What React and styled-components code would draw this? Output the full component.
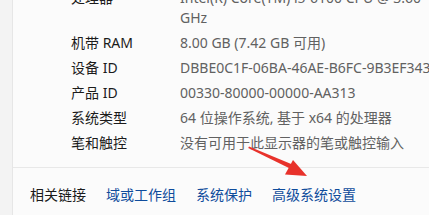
import React from "react";
import styled, { createGlobalStyle } from "styled-components";

const Global = createGlobalStyle`
  html, body { margin: 0; padding: 0; background: #f3f3f3; overflow: hidden; }
  body { font-family: "Segoe UI", "Noto Sans", "Noto Sans CJK SC", sans-serif; }
`;

const Page = styled.div`
  display: flex;
  width: 429px;
  height: 215px;
  overflow: hidden;
  background: #f3f3f3;
`;

const Strip = styled.div`
  width: 12px;
  flex: none;
  background: #f3f3f3;
`;

const Card = styled.div`
  flex: 1;
  min-width: 0;
  display: flex;
  flex-direction: column;
  background: #fbfbfb;
  border-left: 1px solid #e6e6e6;
  overflow: hidden;
`;

const Specs = styled.div`
  margin-top: -12px;
  padding: 0 0 14px 58px;
  display: flex;
  flex-direction: column;
  gap: 5px;
  border-bottom: 1px solid #e8e8e8;
`;

const Row = styled.div`
  display: grid;
  grid-template-columns: 109px 300px;
  font-size: 14px;
  line-height: 20px;
`;

const Label = styled.div`
  color: #1b1b1b;
  white-space: nowrap;
`;

const Value = styled.div`
  color: #616161;
  white-space: nowrap;
`;

const Links = styled.div`
  position: relative;
  flex: 1;
  display: flex;
  gap: 20px;
  padding: 17px 0 0 17px;
  font-size: 14px;
  line-height: 20px;
  white-space: nowrap;
`;

const Heading = styled.span`
  color: #1b1b1b;
`;

const Link = styled.span`
  color: #0f4c9c;
`;

const Arrow = styled.svg`
  position: absolute;
  left: 220px;
  top: -32px;
  overflow: visible;
`;

const specs = [
  ["处理器", "Intel(R) Core(TM) i5-6100 CPU @ 3.60", "GHz"],
  ["机带 RAM", "8.00 GB (7.42 GB 可用)"],
  ["设备 ID", "DBBE0C1F-06BA-46AE-B6FC-9B3EF34361AB"],
  ["产品 ID", "00330-80000-00000-AA313"],
  ["系统类型", "64 位操作系统, 基于 x64 的处理器"],
  ["笔和触控", "没有可用于此显示器的笔或触控输入"],
];

export default function App() {
  return (
    <>
      <Global />
      <Page>
        <Strip />
        <Card>
          <Specs>
            {specs.map(([k, v, v2]) => (
              <Row key={k}>
                <Label>{k}</Label>
                <Value>
                  {v}
                  {v2 && (
                    <>
                      <br />
                      {v2}
                    </>
                  )}
                </Value>
              </Row>
            ))}
          </Specs>
          <Links>
            <Heading>相关链接</Heading>
            <Link>域或工作组</Link>
            <Link>系统保护</Link>
            <Link>高级系统设置</Link>
            <Arrow width="80" height="45" viewBox="0 0 80 45">
              <path d="M16 10.5 L63 30 L61 34.5 L15.2 12 Z" fill="#e8322b" />
              <path d="M74 40 L52 38.5 L60 24 Z" fill="#e8322b" />
            </Arrow>
          </Links>
        </Card>
      </Page>
    </>
  );
}
